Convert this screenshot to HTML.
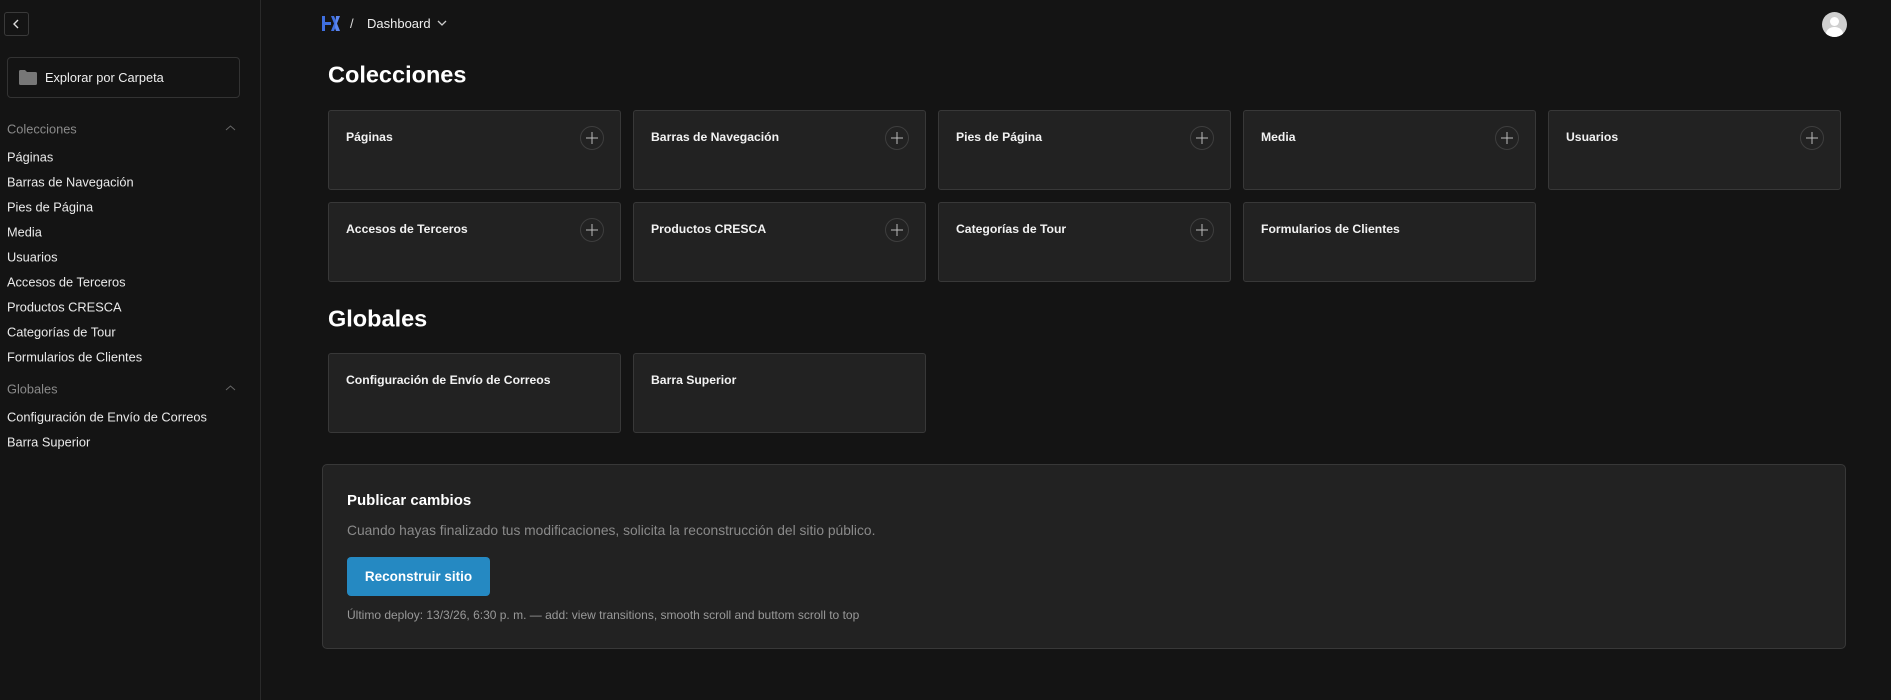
<!DOCTYPE html>
<html><head><meta charset="utf-8"><style>
*{margin:0;padding:0;box-sizing:border-box}
body{width:1891px;height:700px;background:#141414;font-family:"Liberation Sans",sans-serif;color:#fff;position:relative;overflow:hidden}
.abs{position:absolute}
.side{left:0;top:0;width:261px;height:700px;border-right:1px solid #2a2a2a}
.back{left:4px;top:12px;width:25px;height:24px;border:1px solid #3a3a3a;border-radius:3px}
.explore{left:7px;top:57px;width:233px;height:41px;border:1px solid #333;border-radius:4px}
.si{position:absolute;left:7px;font-size:12.8px;color:#eaeaea;transform:translateY(-50%);white-space:nowrap}
.sh{color:#8a8a8a}
.card{position:absolute;width:293px;height:80px;background:#222;border:1px solid #383838;border-radius:3px}
.card .t{position:absolute;left:17px;top:19px;font-size:12.2px;font-weight:bold;color:#f2f2f2}
.plus{position:absolute;right:16px;top:15px;width:24px;height:24px;border:1px solid #3e3e3e;border-radius:50%}
.plus:before,.plus:after{content:"";position:absolute;background:#bbb;left:50%;top:50%;transform:translate(-50%,-50%)}
.plus:before{width:12px;height:1px}.plus:after{width:1px;height:12px}
h1{position:absolute;left:328px;font-size:23.5px;font-weight:bold;transform:translateY(-50%)}
</style></head><body>
<div class="abs side"></div>
<div class="abs back"><svg width="23" height="22" viewBox="0 0 23 22"><path d="M13 7l-4 4 4 4" stroke="#ddd" stroke-width="1.4" fill="none"/></svg></div>
<div class="abs explore"><svg class="abs" style="left:11px;top:12px" width="18" height="15" viewBox="0 0 18 15"><path d="M0 1.5Q0 0 1.5 0H6l2 2h8.5Q18 2 18 3.5V13.5Q18 15 16.5 15H1.5Q0 15 0 13.5Z" fill="#777"/></svg><span class="abs" style="left:37px;top:12px;font-size:12.8px;color:#eee">Explorar por Carpeta</span></div>
<div class="si sh" style="top:129px">Colecciones</div>
<svg class="abs" style="left:225px;top:124px" width="11" height="8"><path d="M1 6l4.5-4 4.5 4" stroke="#666" fill="none"/></svg>
<div class="si" style="top:157px">Páginas</div>
<div class="si" style="top:182px">Barras de Navegación</div>
<div class="si" style="top:207px">Pies de Página</div>
<div class="si" style="top:232px">Media</div>
<div class="si" style="top:257px">Usuarios</div>
<div class="si" style="top:282px">Accesos de Terceros</div>
<div class="si" style="top:307px">Productos CRESCA</div>
<div class="si" style="top:332px">Categorías de Tour</div>
<div class="si" style="top:357px">Formularios de Clientes</div>
<div class="si sh" style="top:389px">Globales</div>
<svg class="abs" style="left:225px;top:384px" width="11" height="8"><path d="M1 6l4.5-4 4.5 4" stroke="#666" fill="none"/></svg>
<div class="si" style="top:417px">Configuración de Envío de Correos</div>
<div class="si" style="top:442px">Barra Superior</div>

<svg class="abs" style="left:322px;top:16px" width="18" height="15" viewBox="0 0 18 15"><path d="M0 0h3v15H0zM3 6h6v3H3zM9 0h3l3 7.5L12 15H9l3-7.5z" fill="#3f6fe0"/><path d="M14 0h4l-3 7.5L18 15h-4l-1-3z" fill="#5b86f0"/></svg>
<span class="abs" style="left:350px;top:16px;font-size:13px;color:#ddd">/</span>
<span class="abs" style="left:367px;top:16px;font-size:13px;color:#eee">Dashboard</span>
<svg class="abs" style="left:437px;top:20px" width="10" height="7"><path d="M1 1l4 4 4-4" stroke="#ccc" fill="none" stroke-width="1.3"/></svg>
<div class="abs" style="left:1822px;top:12px;width:25px;height:25px;border-radius:50%;background:#cfcfcf;overflow:hidden"><div class="abs" style="left:8px;top:5px;width:9px;height:9px;border-radius:50%;background:#fff"></div><div class="abs" style="left:4px;top:15px;width:17px;height:14px;border-radius:50%;background:#fff"></div></div>

<h1 style="top:75px">Colecciones</h1>
<div class="card" style="left:328px;top:110px"><span class="t">Páginas</span><div class="plus"></div></div>
<div class="card" style="left:633px;top:110px"><span class="t">Barras de Navegación</span><div class="plus"></div></div>
<div class="card" style="left:938px;top:110px"><span class="t">Pies de Página</span><div class="plus"></div></div>
<div class="card" style="left:1243px;top:110px"><span class="t">Media</span><div class="plus"></div></div>
<div class="card" style="left:1548px;top:110px"><span class="t">Usuarios</span><div class="plus"></div></div>
<div class="card" style="left:328px;top:202px"><span class="t">Accesos de Terceros</span><div class="plus"></div></div>
<div class="card" style="left:633px;top:202px"><span class="t">Productos CRESCA</span><div class="plus"></div></div>
<div class="card" style="left:938px;top:202px"><span class="t">Categorías de Tour</span><div class="plus"></div></div>
<div class="card" style="left:1243px;top:202px"><span class="t">Formularios de Clientes</span></div>
<h1 style="top:319px">Globales</h1>
<div class="card" style="left:328px;top:353px"><span class="t">Configuración de Envío de Correos</span></div>
<div class="card" style="left:633px;top:353px"><span class="t">Barra Superior</span></div>

<div class="abs" style="left:322px;top:464px;width:1524px;height:185px;background:#222;border:1px solid #383838;border-radius:5px">
<span class="abs" style="left:24px;top:27px;font-size:15px;font-weight:bold">Publicar cambios</span>
<span class="abs" style="left:24px;top:58px;font-size:13.8px;color:#8a8a8a">Cuando hayas finalizado tus modificaciones, solicita la reconstrucción del sitio público.</span>
<div class="abs" style="left:24px;top:92px;width:143px;height:39px;background:#2589c2;border-radius:4px;font-size:13.5px;font-weight:bold;line-height:39px;text-align:center">Reconstruir sitio</div>
<span class="abs" style="left:24px;top:143px;font-size:12px;color:#999">Último deploy: 13/3/26, 6:30 p. m. — add: view transitions, smooth scroll and buttom scroll to top</span>
</div>
</body></html>
